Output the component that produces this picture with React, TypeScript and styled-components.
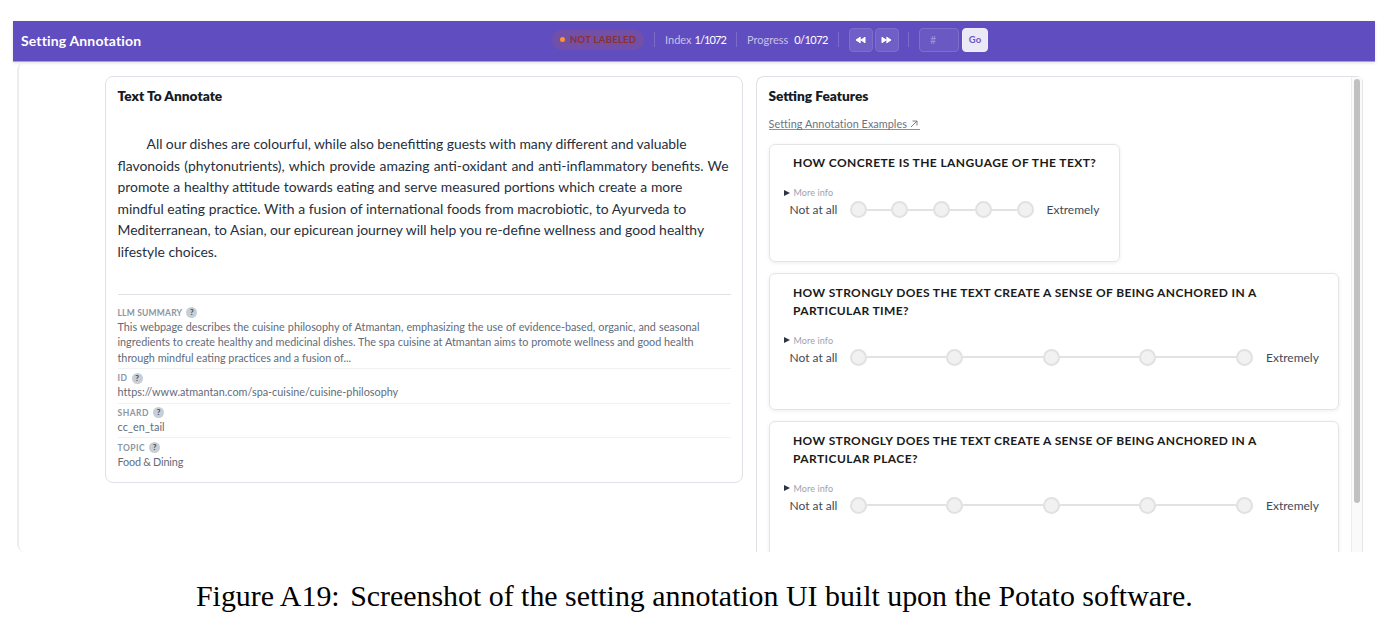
import React from 'react'
import styled, { createGlobalStyle, css } from 'styled-components'

const COLORS = {
    purple: '#604dbf',
    ink: '#151c26',
    text: '#26303d',
    slate: '#5f6b7a',
    muted: '#8b95a3',
    border: '#dfe1e6',
    scale: '#e1e1e1',
}

const GlobalStyle = createGlobalStyle`
    * {
        box-sizing: border-box;
    }
    body {
        margin: 0;
        background: #fff;
        font-family: Lato, "Open Sans", sans-serif;
        color: ${COLORS.text};
    }
`

const Page = styled.div`
    width: 1388px;
    height: 629px;
    padding: 21px 13px 0;
    overflow: hidden;
`

const TopBar = styled.header`
    height: 41px;
    display: flex;
    align-items: center;
    padding: 0 8px 3px;
    background: ${COLORS.purple};
    border-bottom: 1px solid #a79dda;
    box-shadow: 0 1px 3px rgba(0, 0, 0, 0.12);
    color: #fff;
`

const AppTitle = styled.div`
    width: 531px;
    padding-top: 1px;
    font-size: 14px;
    font-weight: 700;
    letter-spacing: 0.15px;
`

const Status = styled.div`
    width: 92px;
    height: 20px;
    display: flex;
    align-items: center;
    gap: 5px;
    padding-left: 8px;
    border-radius: 10px;
    background: #7350a8;
    color: #8a3030;
    font-size: 9.5px;
    font-weight: 700;
    letter-spacing: 0.27px;
    white-space: nowrap;

    &::before {
        content: '';
        width: 5px;
        height: 5px;
        border-radius: 50%;
        background: #ff9430;
    }
`

const Divider = styled.div<{ $left?: number, $right?: number }>`
    width: 1px;
    height: 15px;
    margin: 0 ${p => p.$right ?? 10}px 0 ${p => p.$left ?? 10}px;
    background: #7b6bca;
`

const Counter = styled.div<{ $width: number, $track?: number }>`
    width: ${p => p.$width}px;
    display: flex;
    justify-content: space-between;
    font-size: 11px;
    color: #c9c1ea;
    white-space: nowrap;

    > strong {
        font-weight: 400;
        letter-spacing: ${p => p.$track ?? 0}px;
        color: #fff;
    }
`

const headerControl = css`
    height: 24px;
    display: flex;
    align-items: center;
    justify-content: center;
    padding: 0;
    border: 1px solid #7d6ecb;
    border-radius: 4px;
    background: #705fc7;
    color: #fff;
`

const NavButton = styled.button`
    ${headerControl}
    width: 24px;
    margin-right: 2px;
    padding-right: 1px;
`

const IndexInput = styled.input`
    ${headerControl}
    width: 40px;
    margin-right: 3px;
    padding-right: 12px;
    background: #6a59c3;
    font: 10.5px Lato, sans-serif;
    text-align: center;

    &::placeholder {
        color: #a196da;
        opacity: 1;
    }
`

const GoButton = styled.button`
    ${headerControl}
    width: 26px;
    border-color: #efedf9;
    background: #ece9f7;
    color: #6a58c2;
    font: 700 9.5px Lato, sans-serif;
`

const Workspace = styled.main`
    height: 490px;
    margin: 0 12px 0 4px;
    padding: 14px 0 0 86px;
    display: flex;
    align-items: flex-start;
    gap: 13px;
    border-left: 2px solid #ededf0;
    border-radius: 8px 0 0 8px;
    overflow: hidden;
`

const TextPanel = styled.section`
    width: 638px;
    height: 407px;
    flex: none;
    padding: 11px 11px 0 11.5px;
    border: 1px solid ${COLORS.border};
    border-radius: 8px;
`

const PanelTitle = styled.h2`
    margin: 0;
    font-size: 13.7px;
    line-height: 16px;
    font-weight: 800;
    color: ${COLORS.ink};
`

const Passage = styled.div`
    height: 161px;
    margin-top: 29px;
    font-size: 13.9px;
    line-height: 21.5px;
`

const Line = styled.div<{ $track?: number, $gap?: number, $indent?: number }>`
    padding-left: ${p => p.$indent ?? 0}px;
    letter-spacing: ${p => p.$track ? `${p.$track}px` : 'normal'};
    word-spacing: ${p => p.$gap ?? 0}px;
    white-space: nowrap;
`

const Details = styled.dl`
    margin: 0;
    padding-top: 8.5px;
    border-top: 1px solid ${COLORS.border};
`

const Detail = styled.div`
    padding: 3px 0 3px;
    border-bottom: 1px solid #f0f1f3;

    &:last-child {
        border: 0;
    }
`

const DetailLabel = styled.dt<{ $track?: number }>`
    height: 12.6px;
    display: flex;
    align-items: center;
    gap: 4px;
    font-size: 8.5px;
    font-weight: 700;
    letter-spacing: ${p => p.$track ?? 0.5}px;
    color: ${COLORS.muted};
`

const Help = styled.span`
    width: 11px;
    height: 11px;
    border-radius: 50%;
    background: #c8ced6;
    color: #3d4755;
    font-size: 8px;
    line-height: 11px;
    letter-spacing: 0;
    text-align: center;
`

const DetailValue = styled.dd`
    margin: 0;
    font-size: 10.8px;
    line-height: 15.2px;
    color: ${COLORS.slate};
`

const FeaturesPanel = styled.section`
    width: 608px;
    height: 520px;
    flex: none;
    display: flex;
    border: 1px solid ${COLORS.border};
    border-right: 2px solid #e4e5e8;
    border-radius: 8px 8px 0 0;
`

const Features = styled.div`
    width: 594px;
    flex: none;
    padding: 11px 0 0 11.5px;
`

const ScrollTrack = styled.div`
    flex: 1;
    padding: 2px 2px 0;
    border-left: 1px solid #ececec;
    background: #fafafa;
`

const ScrollThumb = styled.div`
    width: 6px;
    height: 424px;
    border-radius: 3px;
    background: #c1c1c1;
`

const ExamplesLink = styled.a`
    display: flex;
    align-items: center;
    gap: 3px;
    width: 151px;
    height: 13px;
    margin: 13px 0 14px;
    border-bottom: 1px solid #8a909c;
    font-size: 10.8px;
    letter-spacing: 0.07px;
    white-space: nowrap;
    color: #6b7280;

    > svg {
        margin-top: 2px;
    }
`

const QuestionCard = styled.article<{ $narrow?: boolean }>`
    width: ${p => p.$narrow ? 351 : 570.5}px;
    height: ${p => p.$narrow ? 118 : 137}px;
    margin-bottom: 11px;
    padding: ${p => p.$narrow ? 9 : 9.6}px 19px 0 14px;
    border: 1px solid #e4e4e6;
    border-radius: 6px;
    box-shadow: 0 1px 4px rgba(0, 0, 0, 0.07);
`

const Question = styled.h3`
    margin: 0 0 12px 9.5px;
    font-size: 12px;
    line-height: 18px;
    font-weight: 700;
    color: #1a1a1a;
`

const MoreInfo = styled.div`
    height: 17px;
    display: flex;
    align-items: center;
    gap: 4px;
    font-size: 9px;
    letter-spacing: 0.1px;
    color: #9aa2b0;
`

const Scale = styled.div`
    height: 17px;
    display: flex;
    align-items: center;
    padding-left: 6px;
    font-size: 12px;
    color: #404a59;
    white-space: nowrap;
`

const ScaleLabel = styled.span<{ $width: number }>`
    width: ${p => p.$width}px;
    flex: none;
`

const Points = styled.div`
    flex: 1;
    display: flex;
    align-items: center;
    margin-right: 13px;
`

const Point = styled.span`
    width: 17px;
    height: 17px;
    flex: none;
    border: 2px solid ${COLORS.scale};
    border-radius: 50%;
    background: #f1f1f1;
`

const Segment = styled.span`
    flex: 1;
    height: 2px;
    background: #e2e2e2;
`

const Caption = styled.p`
    margin: 26px 0 0 183px;
    font-family: "Liberation Serif", "Times New Roman", serif;
    font-size: 29.9px;
    line-height: 36px;
    color: #000;
    white-space: nowrap;
`

const FigureNumber = styled.span`
    margin-right: 3px;
`

interface TextLine {
    text: string
    track?: number
    gap?: number
}

interface DetailEntry {
    label: string
    labelTrack?: number
    lines: TextLine[]
}

interface QuestionEntry {
    lines: TextLine[]
    narrow?: boolean
}

const PASSAGE: TextLine[] = [
    { text: 'All our dishes are colourful, while also benefitting guests with many different and valuable', gap: -0.2 },
    { text: 'flavonoids (phytonutrients), which provide amazing anti-oxidant and anti-inflammatory benefits. We', gap: 0.75 },
    { text: 'promote a healthy attitude towards eating and serve measured portions which create a more', gap: 0.25 },
    { text: 'mindful eating practice. With a fusion of international foods from macrobiotic, to Ayurveda to', gap: 0.1 },
    { text: 'Mediterranean, to Asian, our epicurean journey will help you re-define wellness and good healthy', gap: -0.1 },
    { text: 'lifestyle choices.' },
]

const DETAILS: DetailEntry[] = [
    {
        label: 'LLM SUMMARY',
        labelTrack: 0.2,
        lines: [
            { text: 'This webpage describes the cuisine philosophy of Atmantan, emphasizing the use of evidence-based, organic, and seasonal', gap: 0.3 },
            { text: 'ingredients to create healthy and medicinal dishes. The spa cuisine at Atmantan aims to promote wellness and good health', gap: 0.05 },
            { text: 'through mindful eating practices and a fusion of...' },
        ],
    },
    { label: 'ID', lines: [{ text: 'https://www.atmantan.com/spa-cuisine/cuisine-philosophy', track: 0.02 }] },
    { label: 'SHARD', lines: [{ text: 'cc_en_tail', track: 0.1 }] },
    { label: 'TOPIC', lines: [{ text: 'Food & Dining', track: -0.1, gap: -0.5 }] },
]

const QUESTIONS: QuestionEntry[] = [
    { narrow: true, lines: [{ text: 'HOW CONCRETE IS THE LANGUAGE OF THE TEXT?', track: 0.4 }] },
    {
        lines: [
            { text: 'HOW STRONGLY DOES THE TEXT CREATE A SENSE OF BEING ANCHORED IN A', track: 0.36 },
            { text: 'PARTICULAR TIME?', track: 0.4 },
        ],
    },
    {
        lines: [
            { text: 'HOW STRONGLY DOES THE TEXT CREATE A SENSE OF BEING ANCHORED IN A', track: 0.36 },
            { text: 'PARTICULAR PLACE?', track: 0.44 },
        ],
    },
]

const SkipIcon: React.FC<{ forward?: boolean }> = ({ forward }) => (
    <svg width="11" height="8" viewBox="0 0 11 8" fill="currentColor" stroke="currentColor" strokeLinejoin="round">
        {forward
            ? <path d="M1 1.2v5.6L5 4zM5.8 1.2v5.6L10 4z" />
            : <path d="M10 1.2v5.6L6 4zM5.2 1.2v5.6L1 4z" />}
    </svg>
)

const ScalePoints: React.FC = () => (
    <Points>
        {[0, 1, 2, 3, 4].map(i => (
            <React.Fragment key={i}>
                {i > 0 && <Segment />}
                <Point />
            </React.Fragment>
        ))}
    </Points>
)

const App: React.FC = () => (
    <Page>
        <GlobalStyle />
        <TopBar>
            <AppTitle>Setting Annotation</AppTitle>
            <Status>NOT LABELED</Status>
            <Divider />
            <Counter $width={61} $track={-0.9}>Index <strong>1/1072</strong></Counter>
            <Divider />
            <Counter $width={81} $track={-0.5}>Progress <strong>0/1072</strong></Counter>
            <Divider />
            <NavButton><SkipIcon /></NavButton>
            <NavButton><SkipIcon forward /></NavButton>
            <Divider $left={7} />
            <IndexInput placeholder="#" />
            <GoButton>Go</GoButton>
        </TopBar>

        <Workspace>
            <TextPanel>
                <PanelTitle>Text To Annotate</PanelTitle>
                <Passage>
                    {PASSAGE.map(({ text, track, gap }, i) => (
                        <Line key={text} $track={track} $gap={gap} $indent={i === 0 ? 29 : 0}>{text}</Line>
                    ))}
                </Passage>
                <Details>
                    {DETAILS.map(({ label, labelTrack, lines }) => (
                        <Detail key={label}>
                            <DetailLabel $track={labelTrack}>{label}<Help>?</Help></DetailLabel>
                            <DetailValue>
                                {lines.map(({ text, track, gap }) => (
                                    <Line key={text} $track={track} $gap={gap}>{text}</Line>
                                ))}
                            </DetailValue>
                        </Detail>
                    ))}
                </Details>
            </TextPanel>

            <FeaturesPanel>
                <Features>
                    <PanelTitle>Setting Features</PanelTitle>
                    <ExamplesLink>
                        Setting Annotation Examples
                        <svg width="8" height="8" viewBox="0 0 8 8" fill="none" stroke="currentColor" strokeWidth="0.9">
                            <path d="M1 7l6-6M2.5 1H7v4.5" />
                        </svg>
                    </ExamplesLink>
                    {QUESTIONS.map(({ lines, narrow }, i) => (
                        <QuestionCard key={i} $narrow={narrow}>
                            <Question>
                                {lines.map(({ text, track }) => <Line key={text} $track={track}>{text}</Line>)}
                            </Question>
                            <MoreInfo>
                                <svg width="6" height="6" viewBox="0 0 6 6" fill="#2c3542"><path d="M0 0l6 3-6 3z" /></svg>
                                More info
                            </MoreInfo>
                            <Scale>
                                <ScaleLabel $width={60}>Not at all</ScaleLabel>
                                <ScalePoints />
                                <ScaleLabel $width={53}>Extremely</ScaleLabel>
                            </Scale>
                        </QuestionCard>
                    ))}
                </Features>
                <ScrollTrack><ScrollThumb /></ScrollTrack>
            </FeaturesPanel>
        </Workspace>

        <Caption>
            <FigureNumber>Figure A19:</FigureNumber> Screenshot of the setting annotation UI built upon the Potato software.
        </Caption>
    </Page>
)

export default App
